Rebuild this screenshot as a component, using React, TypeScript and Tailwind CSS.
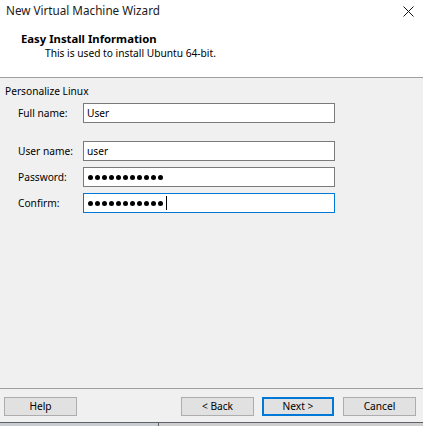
import React from "react";

const Dots = ({ count, caret }: { count: number; caret?: boolean }) => (
  <div className="flex items-center gap-[2px] pl-[4px] h-full">
    {Array.from({ length: count }).map((_, i) => (
      <span key={i} className="w-[5px] h-[5px] rounded-full bg-black" />
    ))}
    {caret && <span className="ml-[1px] w-[1px] h-[14px] bg-black" />}
  </div>
);

const Field = ({
  label,
  children,
  focused,
  className = "",
}: {
  label: string;
  children: React.ReactNode;
  focused?: boolean;
  className?: string;
}) => (
  <div className={`flex items-center ${className}`}>
    <div className="w-[65px] text-[10.2px] leading-[15px] text-black">{label}</div>
    <div
      className={`w-[252px] h-[20px] bg-white border ${
        focused ? "border-[#0078d7]" : "border-[#7a7a7a]"
      }`}
    >
      {children}
    </div>
  </div>
);

const Btn = ({ label, primary, w = "w-[73px]" }: { label: string; primary?: boolean; w?: string }) => (
  <div
    className={`h-[19px] ${w} flex items-center justify-center bg-[#e1e1e1] text-[10.2px] text-black ${
      primary ? "border-2 border-[#0078d7]" : "border border-[#adadad]"
    }`}
  >
    {label}
  </div>
);

export default function App() {
  return (
    <div
      className="w-[423px] h-[426px] flex flex-col bg-[#f0f0f0] overflow-hidden"
      style={{ fontFamily: '"Noto Sans", "Liberation Sans", sans-serif' }}
    >
      {/* header */}
      <div className="h-[78px] bg-white border-b border-[#a0a0a0] shrink-0">
        <div className="h-[21px] flex items-center justify-between pl-[6px] pr-[9px]">
          <span className="text-[11.7px] text-[#1a1a1a]">New Virtual Machine Wizard</span>
          <svg width="11" height="11" viewBox="0 0 11 11" className="mt-[1px]">
            <path d="M0.5 0.5 L10.5 10.5 M10.5 0.5 L0.5 10.5" stroke="#111" strokeWidth="1" />
          </svg>
        </div>
        <div className="mt-[10px] pl-[21px] text-[11.3px] leading-[15px] font-bold text-black">
          Easy Install Information
        </div>
        <div className="pl-[45px] text-[10.2px] leading-[15px] text-black">
          This is used to install Ubuntu 64-bit.
        </div>
      </div>

      {/* body */}
      <div className="flex-1 flex flex-col">
        <div className="pt-[6px] pl-[5px] text-[10.2px] leading-[15px] text-black">Personalize Linux</div>
        <div className="pl-[18px] flex flex-col">
          <Field label="Full name:" className="mt-[4px]">
            <div className="pl-[3px] text-[10.2px] leading-[18px] text-black">User</div>
          </Field>
          <Field label="User name:" className="mt-[18px]">
            <div className="pl-[3px] text-[10.2px] leading-[18px] text-black">user</div>
          </Field>
          <Field label="Password:" className="mt-[6px]">
            <Dots count={11} />
          </Field>
          <Field label="Confirm:" focused className="mt-[6px]">
            <Dots count={11} caret />
          </Field>
        </div>
      </div>

      {/* footer */}
      <div className="h-[34px] border-t border-[#a0a0a0] shrink-0 flex items-start pt-[8px] px-[4px]">
        <Btn label="Help" />
        <div className="flex-1" />
        <div className="flex pr-[3px]">
          <Btn label="< Back" />
          <div className="w-[8px]" />
          <Btn label="Next >" primary w="w-[72px]" />
          <div className="w-[9px]" />
          <Btn label="Cancel" />
        </div>
      </div>
      <div className="h-[4px] border-t border-[#5f6368] flex shrink-0">
        <div className="w-[159px] bg-[#c9ccd1] border-r border-[#5f6368]" />
        <div className="flex-1 bg-[#cfcfcf]" />
      </div>
    </div>
  );
}
